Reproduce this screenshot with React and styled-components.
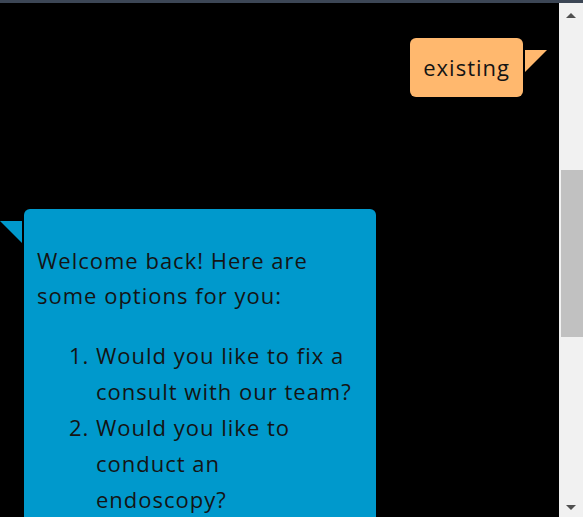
import React from 'react';
import styled, { createGlobalStyle } from 'styled-components';

const GlobalStyle = createGlobalStyle`
  html, body {
    margin: 0;
    padding: 0;
    background: #000;
    overflow: hidden;
  }
`;

const Pagina = styled.div`
  width: 583px;
  height: 517px;
  display: flex;
  flex-direction: column;
  font-family: "Open Sans", "Noto Sans", sans-serif;
`;

const BarraTopo = styled.div`
  height: 3px;
  background-color: #3c4655;
  flex-shrink: 0;
`;

const Corpo = styled.div`
  flex: 1;
  display: flex;
  min-height: 0;
`;

const AreaChat = styled.div`
  flex: 1;
  background-color: #000;
  overflow: hidden;
  display: flex;
  flex-direction: column;
  gap: 112px;
  padding: 35px 12px 0 0;
`;

const LinhaMensagem = styled.div`
  display: flex;
  gap: 2px;
  align-items: flex-start;
  justify-content: ${(props) => (props.lado === 'usuario' ? 'flex-end' : 'flex-start')};
`;

const Balao = styled.div`
  background-color: ${(props) => props.cor};
  color: #141414;
  border-radius: 6px;
  padding: 12px 13px;
  font-size: 22px;
  line-height: 35px;
  letter-spacing: 1px;
  width: ${(props) => props.largura || 'auto'};
  box-sizing: border-box;
  flex-shrink: 0;

  p {
    margin: 22px 0;
  }

  ol {
    margin: 24px 0 22px;
    padding: 0 8px 0 59px;
  }

  li {
    line-height: 36px;
  }
`;

const Ponta = styled.div`
  width: 0;
  height: 0;
  margin-top: 12px;
  border-top: 22px solid ${(props) => props.cor};
  ${(props) =>
    props.lado === 'usuario'
      ? 'border-right: 22px solid transparent;'
      : 'border-left: 22px solid transparent;'}
`;

const BarraRolagem = styled.div`
  width: 24px;
  background-color: #f1f1f1;
  display: flex;
  flex-direction: column;
  align-items: center;
`;

const Seta = styled.div`
  width: 0;
  height: 0;
  margin: ${(props) => (props.direcao === 'cima' ? '10px 0 0' : 'auto 0 7px')};
  border-left: 5px solid transparent;
  border-right: 5px solid transparent;
  ${(props) =>
    props.direcao === 'cima'
      ? 'border-bottom: 5px solid #505050;'
      : 'border-top: 5px solid #505050;'}
`;

const Polegar = styled.div`
  width: 22px;
  height: 167px;
  margin-top: 152px;
  margin-left: 2px;
  background-color: #c1c1c1;
`;

const LARANJA = '#ffb86e';
const AZUL = '#0099cc';

const App = () => (
  <Pagina>
    <GlobalStyle />
    <BarraTopo />
    <Corpo>
      <AreaChat>
        <LinhaMensagem lado="usuario">
          <Balao cor={LARANJA}>existing</Balao>
          <Ponta cor={LARANJA} lado="usuario" />
        </LinhaMensagem>
        <LinhaMensagem lado="bot">
          <Ponta cor={AZUL} lado="bot" />
          <Balao cor={AZUL} largura="352px">
            <p>Welcome back! Here are some options for you:</p>
            <ol>
              <li>Would you like to fix a consult with our team?</li>
              <li>Would you like to conduct an endoscopy?</li>
            </ol>
          </Balao>
        </LinhaMensagem>
      </AreaChat>
      <BarraRolagem>
        <Seta direcao="cima" />
        <Polegar />
        <Seta direcao="baixo" />
      </BarraRolagem>
    </Corpo>
  </Pagina>
);

export default App;
